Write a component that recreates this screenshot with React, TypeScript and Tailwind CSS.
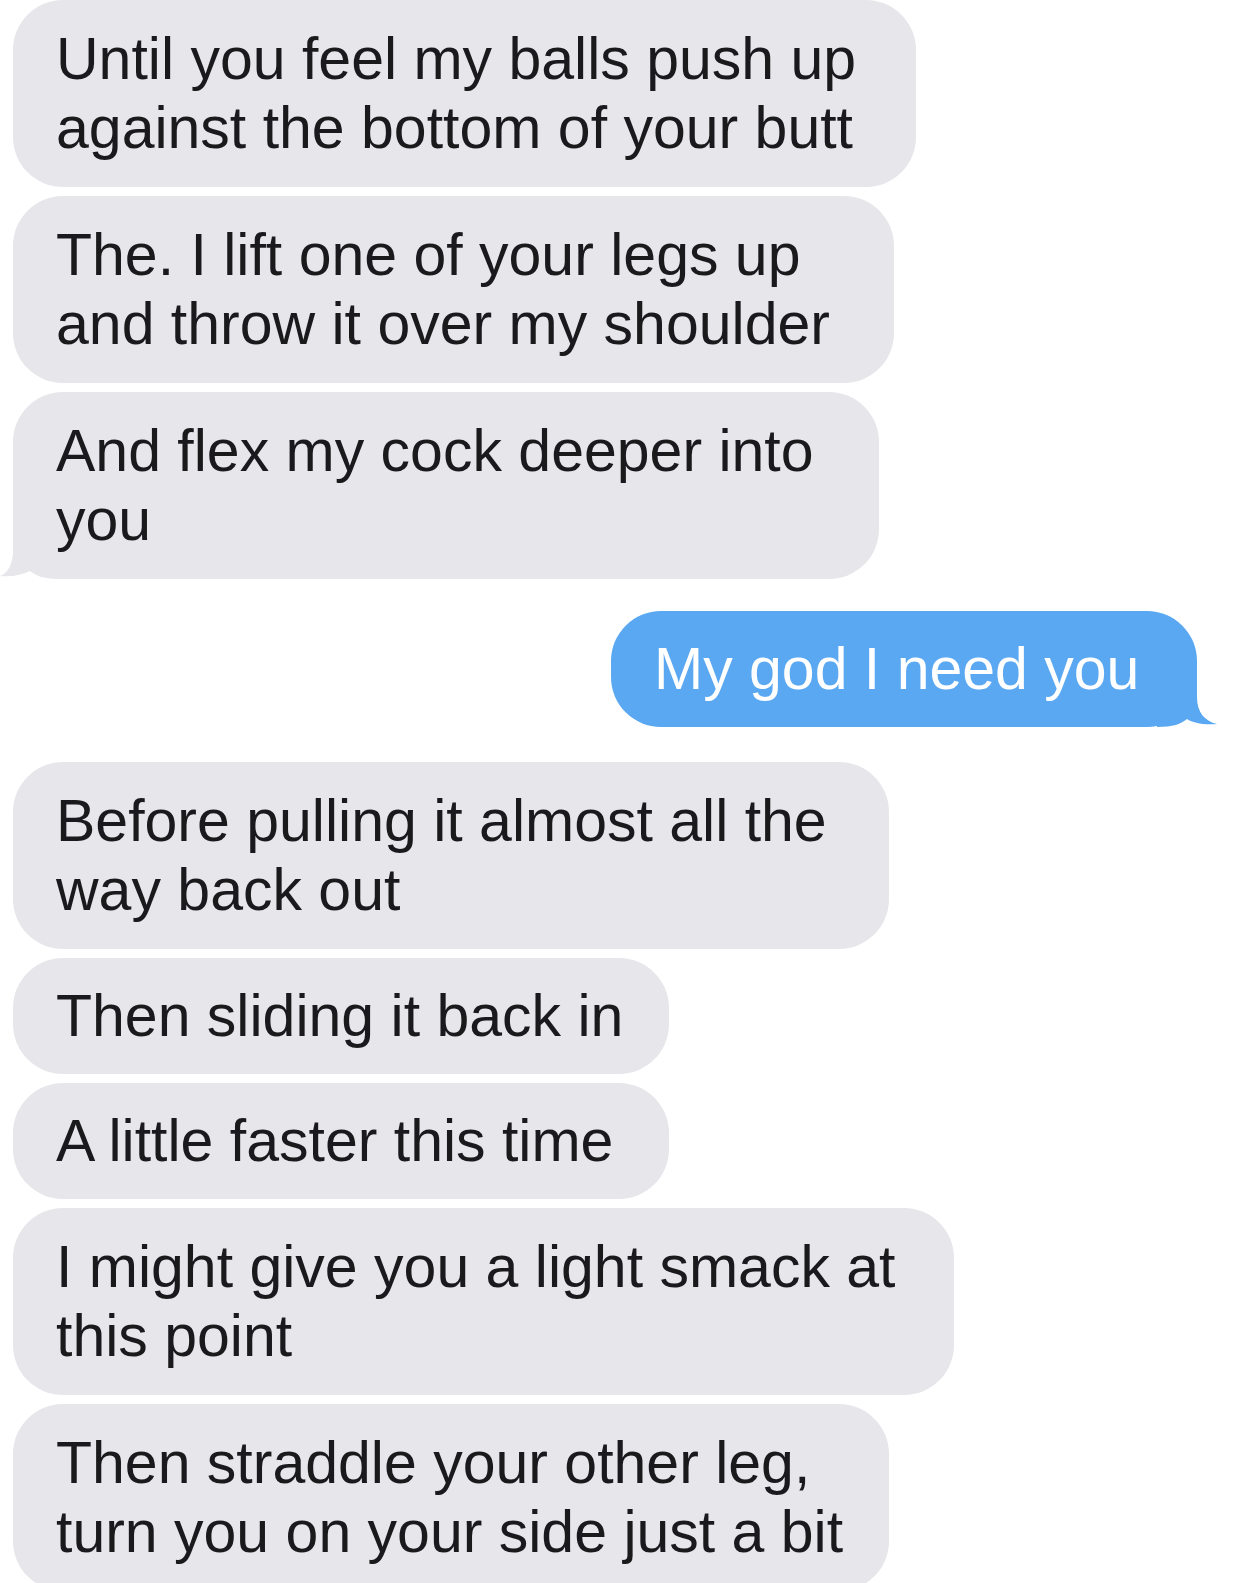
import React from "react";

type Msg = {
  from: "them" | "me";
  lines: string[];
  width: string;
  tail?: boolean;
  gapTop?: string;
};

const messages: Msg[] = [
  { from: "them", width: "w-[903px]", lines: ["Until you feel my balls push up", "against the bottom of your butt"] },
  { from: "them", width: "w-[881px]", lines: ["The. I lift one of your legs up", "and throw it over my shoulder"] },
  { from: "them", width: "w-[866px]", lines: ["And flex my cock deeper into", "you"], tail: true },
  { from: "me", width: "w-[586px]", lines: ["My god I need you"], tail: true, gapTop: "mt-[23px]" },
  { from: "them", width: "w-[876px]", lines: ["Before pulling it almost all the", "way back out"], gapTop: "mt-[26px]" },
  { from: "them", width: "w-[656px]", lines: ["Then sliding it back in"] },
  { from: "them", width: "w-[656px]", lines: ["A little faster this time"] },
  { from: "them", width: "w-[941px]", lines: ["I might give you a light smack at", "this point"] },
  { from: "them", width: "w-[876px]", lines: ["Then straddle your other leg,", "turn you on your side just a bit"] },
];

function LeftTail() {
  return (
    <svg className="absolute left-[-13px] bottom-0" width="60" height="60" viewBox="0 0 60 60">
      <path d="M13 0 L13 30 C13 46 8 54 0 57 C12 58 22 56 30 52 C36 57 44 60 60 60 L60 0 Z" fill="#e6e6eb" />
    </svg>
  );
}

function RightTail() {
  return (
    <svg className="absolute right-[-20px] bottom-0" width="60" height="60" viewBox="0 0 60 60">
      <path d="M40 0 L40 30 C40 46 48 54 60 57 C46 58 36 56 30 52 C24 57 16 60 0 60 L0 0 Z" fill="#5aa8f1" />
    </svg>
  );
}

function Bubble({ msg }: { msg: Msg }) {
  const mine = msg.from === "me";
  const height = msg.lines.length > 1 ? "h-[187px]" : "h-[116px]";
  return (
    <div className={`flex w-full ${mine ? "justify-end pr-[45px]" : "justify-start pl-[13px]"} ${msg.gapTop ?? ""}`}>
      <div
        className={`relative flex items-center rounded-[50px] pl-[43px] whitespace-nowrap text-[59px] leading-[69px] ${height} ${msg.width} ${
          mine ? "bg-[#5aa8f1] text-white" : "bg-[#e6e6eb] text-[#1a1a1c]"
        }`}
      >
        {msg.tail && (mine ? <RightTail /> : <LeftTail />)}
        <div className="relative">
          {msg.lines.map((l, i) => (
            <div key={i}>{l}</div>
          ))}
        </div>
      </div>
    </div>
  );
}

export default function App() {
  return (
    <div className="w-[1242px] h-[1583px] overflow-hidden bg-white font-['Liberation_Sans',Arial,sans-serif]">
      <div className="flex flex-col gap-[9px]">
        {messages.map((m, i) => (
          <Bubble key={i} msg={m} />
        ))}
      </div>
    </div>
  );
}
